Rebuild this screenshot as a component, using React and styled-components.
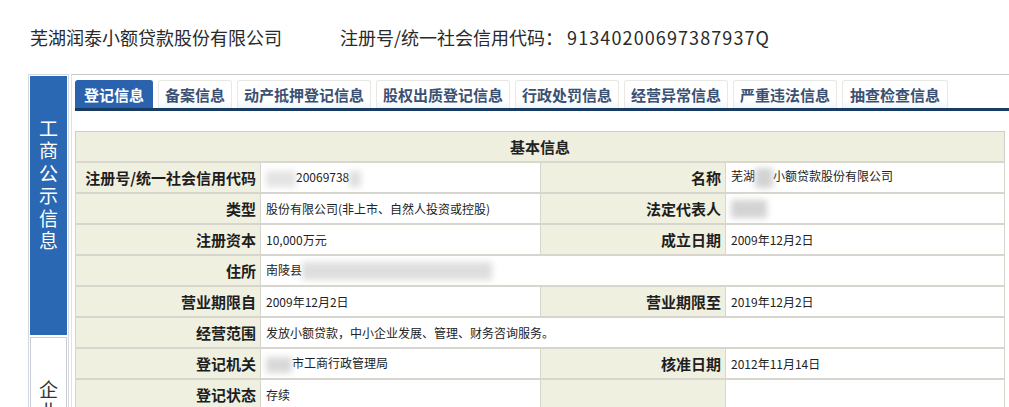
import styled, { createGlobalStyle } from 'styled-components'

const GlobalStyle = createGlobalStyle`
  body {
    margin: 0;
    background: #fff;
    font-family: "Noto Sans CJK SC", "Noto Sans", sans-serif;
    color: #222;
  }
`

const Page = styled.div`
  width: 1009px;
  height: 407px;
  overflow: hidden;
`

const Header = styled.header`
  height: 74px;
  display: flex;
  align-items: center;
  padding-left: 30px;
  gap: 58px;
  font-size: 18px;
  color: #2a2a2a;
`

const Code = styled.span`
  letter-spacing: 1.1px;
`

const Frame = styled.div`
  display: flex;
  margin-left: 28px;
`

const Sidebar = styled.aside`
  width: 37px;
  flex-shrink: 0;
  border: 1px solid #d4d8e0;
  border-bottom: none;
  padding: 1px 1px 0;
  display: flex;
  flex-direction: column;
  gap: 2px;
`

const SideBlock = styled.div`
  height: ${p => p.$h}px;
  background: ${p => (p.$active ? '#2a68b3' : '#fff')};
  border: 1px solid ${p => (p.$active ? '#2a68b3' : '#c9ccd4')};
  color: ${p => (p.$active ? '#fff' : '#333')};
  font-size: 19px;
  line-height: 22.4px;
  padding-top: ${p => p.$top}px;
  box-sizing: border-box;
`

const SideText = styled.div`
  width: 20px;
  margin: 0 auto;
  text-align: center;
`

const Content = styled.main`
  flex: 1;
  margin-left: 2px;
  border-left: 1px solid #dfe2e8;
  border-top: 1px solid #c8c8c8;
  padding: 5px 0 0 3px;
`

const TabBar = styled.nav`
  display: flex;
  gap: 5px;
  border-bottom: 3px solid #173b62;
  height: 28px;
`

const Tab = styled.div`
  height: 28px;
  box-sizing: border-box;
  padding: 0 ${p => p.$pad}px;
  display: flex;
  align-items: center;
  font-size: 15px;
  font-weight: bold;
  border-radius: 3px 3px 0 0;
  color: ${p => (p.$active ? '#fff' : '#3b5173')};
  background: ${p => (p.$active ? '#2a62ad' : 'linear-gradient(#fff 70%, #eef6fb)')};
  border: 1px solid ${p => (p.$active ? '#2a62ad' : '#e8e8e4')};
  border-bottom: none;
`

const Table = styled.table`
  margin-top: 20px;
  width: 929px;
  border-collapse: collapse;
  table-layout: fixed;
  border: 1px solid #cfcfc8;
`

const HeadCell = styled.th`
  height: 29px;
  background: #efefe0;
  font-size: 15px;
  font-weight: bold;
  text-align: center;
  border-bottom: 2px solid #d8d8d0;
  padding: 0;
`

const Label = styled.th`
  height: 29px;
  background: #f0f0e1;
  font-size: 15px;
  font-weight: bold;
  color: #1e1e1e;
  text-align: right;
  padding: 0 4px 0 0;
  border: 1px solid #d6d6cf;
  border-bottom: 2px solid #d6d6cf;
  white-space: nowrap;
`

const Value = styled.td`
  height: 29px;
  background: #fff;
  font-size: 12px;
  color: #222;
  padding: 0 0 0 5px;
  border: 1px solid #d6d6cf;
  border-bottom: 2px solid #d6d6cf;
  white-space: nowrap;
  overflow: hidden;
`

const Blur = styled.span`
  display: inline-block;
  vertical-align: middle;
  width: ${p => p.$w}px;
  height: ${p => p.$h || 16}px;
  background: #c8c8c8;
  filter: blur(3px);
  opacity: ${p => p.$o || 0.8};
`

const tabs = [
  ['登记信息', 8, true],
  ['备案信息', 6],
  ['动产抵押登记信息', 6],
  ['股权出质登记信息', 6],
  ['行政处罚信息', 6],
  ['经营异常信息', 6],
  ['严重违法信息', 6],
  ['抽查检查信息', 7],
]

export default function App() {
  return (
    <Page>
      <GlobalStyle />
      <Header>
        <span>芜湖润泰小额贷款股份有限公司</span>
        <span>注册号/统一社会信用代码： <Code>91340200697387937Q</Code></span>
      </Header>
      <Frame>
        <Sidebar>
          <SideBlock $active $h={259} $top={40}>
            <SideText>工商公示信息</SideText>
          </SideBlock>
          <SideBlock $h={120} $top={40}>
            <SideText>企业公示信息</SideText>
          </SideBlock>
        </Sidebar>
        <Content>
          <TabBar>
            {tabs.map(([t, pad, active]) => (
              <Tab key={t} $pad={pad} $active={active}>{t}</Tab>
            ))}
          </TabBar>
          <Table>
            <colgroup>
              <col style={{ width: 185 }} />
              <col style={{ width: 280 }} />
              <col style={{ width: 185 }} />
              <col style={{ width: 279 }} />
            </colgroup>
            <thead>
              <tr><HeadCell colSpan={4}>基本信息</HeadCell></tr>
            </thead>
            <tbody>
              <tr>
                <Label>注册号/统一社会信用代码</Label>
                <Value><Blur $w={30} $o={0.5} />20069738<Blur $w={12} $o={0.6} /></Value>
                <Label>名称</Label>
                <Value>芜湖<Blur $w={18} $h={20} />小额贷款股份有限公司</Value>
              </tr>
              <tr>
                <Label>类型</Label>
                <Value>股份有限公司(非上市、自然人投资或控股)</Value>
                <Label>法定代表人</Label>
                <Value><Blur $w={36} $h={18} /></Value>
              </tr>
              <tr>
                <Label>注册资本</Label>
                <Value>10,000万元</Value>
                <Label>成立日期</Label>
                <Value>2009年12月2日</Value>
              </tr>
              <tr>
                <Label>住所</Label>
                <Value colSpan={3}>南陵县<Blur $w={190} $h={18} $o={0.6} /></Value>
              </tr>
              <tr>
                <Label>营业期限自</Label>
                <Value>2009年12月2日</Value>
                <Label>营业期限至</Label>
                <Value>2019年12月2日</Value>
              </tr>
              <tr>
                <Label>经营范围</Label>
                <Value colSpan={3}>发放小额贷款，中小企业发展、管理、财务咨询服务。</Value>
              </tr>
              <tr>
                <Label>登记机关</Label>
                <Value><Blur $w={26} $o={0.7} />市工商行政管理局</Value>
                <Label>核准日期</Label>
                <Value>2012年11月14日</Value>
              </tr>
              <tr>
                <Label>登记状态</Label>
                <Value>存续</Value>
                <Label></Label>
                <Value></Value>
              </tr>
            </tbody>
          </Table>
        </Content>
      </Frame>
    </Page>
  )
}
